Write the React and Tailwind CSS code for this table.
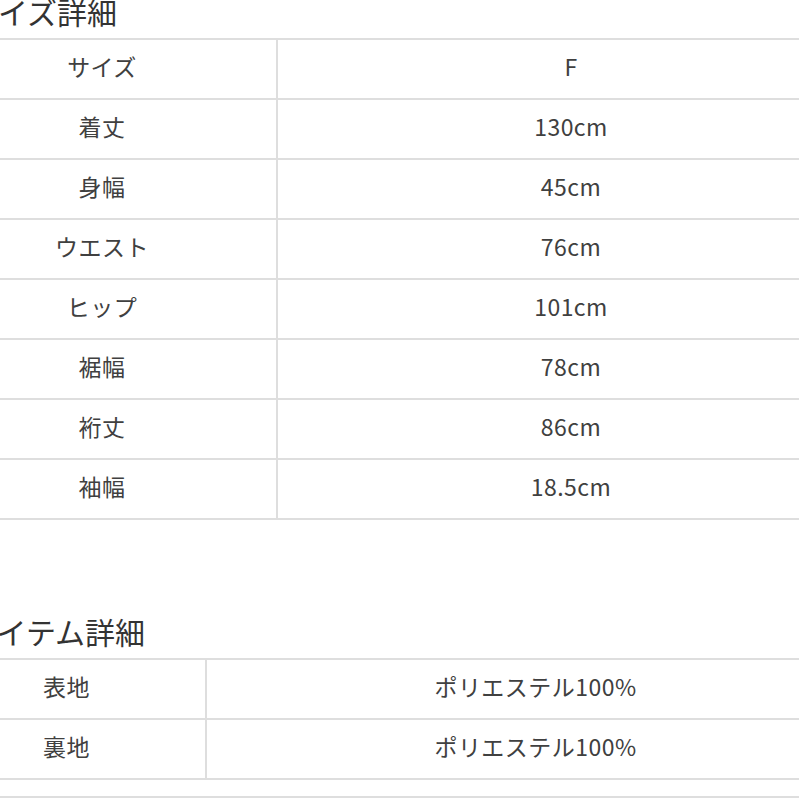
const sizeRows = [
  ["サイズ", "F"],
  ["着丈", "130cm"],
  ["身幅", "45cm"],
  ["ウエスト", "76cm"],
  ["ヒップ", "101cm"],
  ["裾幅", "78cm"],
  ["裄丈", "86cm"],
  ["袖幅", "18.5cm"],
];

const itemRows = [
  ["表地", "ポリエステル100%"],
  ["裏地", "ポリエステル100%"],
];

function DetailTable({ rows, labelWidth }) {
  return (
    <div className="border-t-2 border-[#dedede]">
      {rows.map(([label, value]) => (
        <div key={label} className="flex h-[60px] border-b-2 border-[#dedede]">
          <div
            className={`${labelWidth} shrink-0 flex items-center justify-center pb-[6px] border-r-2 border-[#dedede]`}
          >
            {label}
          </div>
          <div className="flex-1 flex items-center justify-center pb-[6px]">{value}</div>
        </div>
      ))}
    </div>
  );
}

export default function App() {
  return (
    <div
      className="w-[799px] h-[799px] overflow-hidden bg-white text-[#404040]"
      style={{ fontFamily: '"Noto Sans CJK JP", "Noto Sans", sans-serif' }}
    >
      <div className="ml-[-72px] w-[936px] text-[23px] tracking-[0.02em]">
        {/* サイズ詳細 */}
        <h2 className="pl-[40px] text-[30px] leading-[22px] mb-[16px] tracking-normal text-[#333]">
          サイズ詳細
        </h2>
        <DetailTable rows={sizeRows} labelWidth="w-[350px]" />

        {/* アイテム詳細 */}
        <h2 className="pl-[40px] mt-[100px] text-[30px] leading-[22px] mb-[16px] tracking-normal text-[#333]">
          アイテム詳細
        </h2>
        <DetailTable rows={itemRows} labelWidth="w-[279px]" />

        <div className="mt-[16px] border-t-2 border-[#dedede]" />
      </div>
    </div>
  );
}
